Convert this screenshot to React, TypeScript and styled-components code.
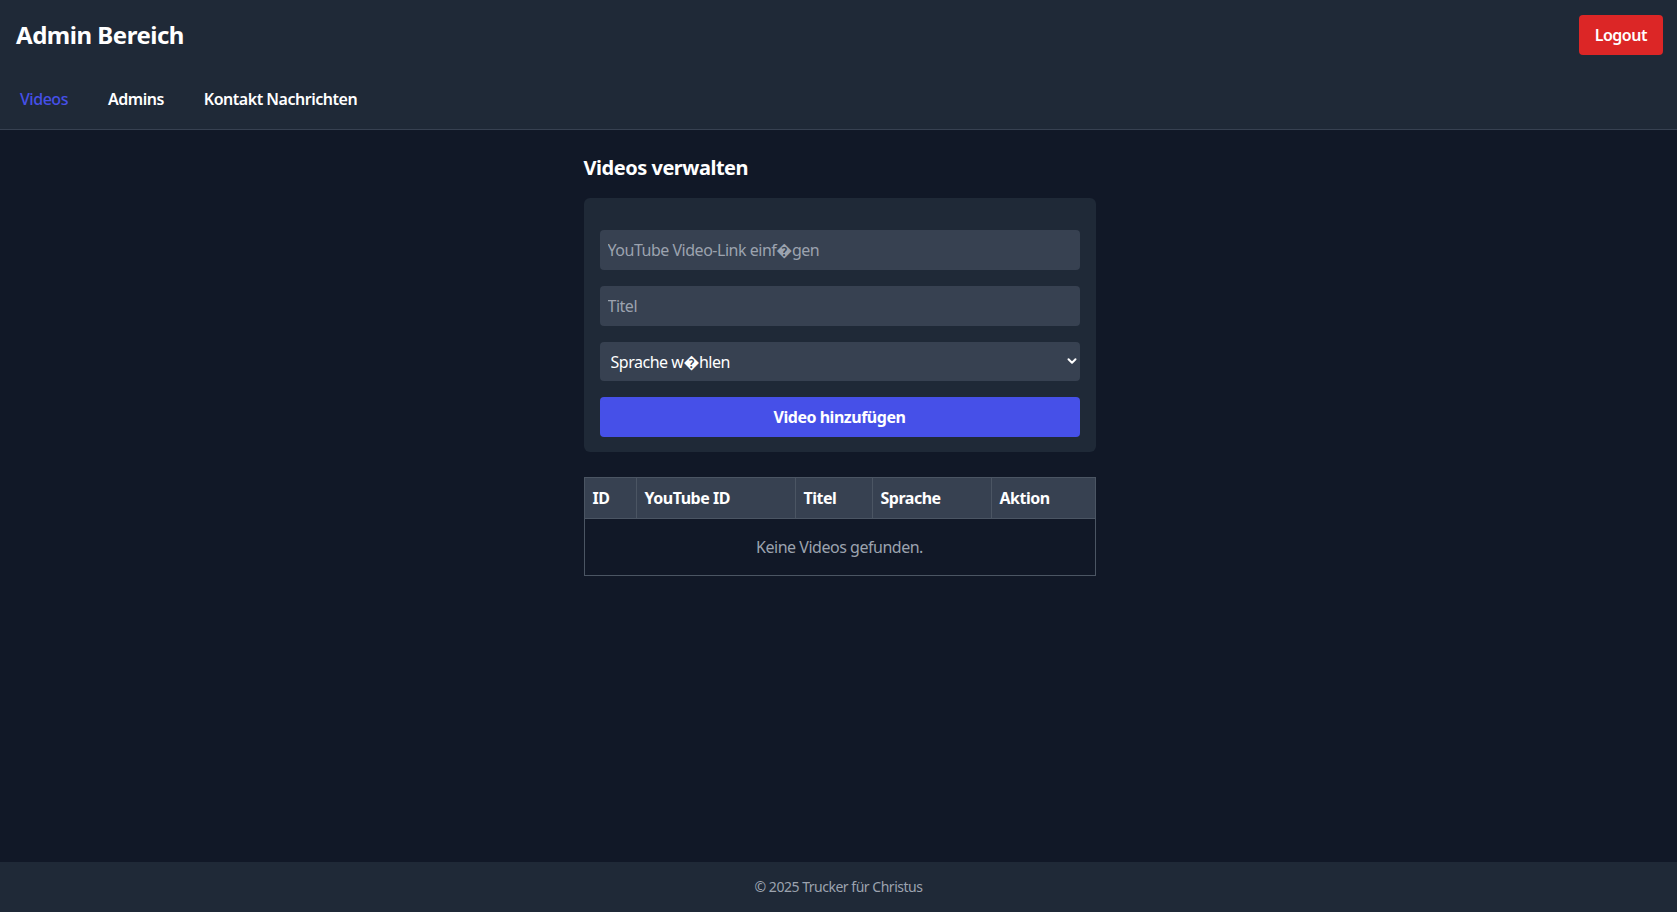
import React, { useState } from "react";
import styled, { createGlobalStyle } from "styled-components";

const columns = [
  { label: "ID", width: 52 },
  { label: "YouTube ID", width: 159 },
  { label: "Titel", width: 77 },
  { label: "Sprache", width: 119 },
  { label: "Aktion", width: 104 },
];

const tabs = ["Videos", "Admins", "Kontakt Nachrichten"];

export default function App() {
  const [tab, setTab] = useState("Videos");
  const [link, setLink] = useState("");
  const [title, setTitle] = useState("");
  const [lang, setLang] = useState("");

  return (
    <>
      <GlobalStyle />
      <Page>
        <Header>
          <TopRow>
            <Title>Admin Bereich</Title>
            <LogoutButton>Logout</LogoutButton>
          </TopRow>
          <Nav>
            {tabs.map((t) => (
              <NavLink key={t} $active={t === tab} onClick={() => setTab(t)}>
                {t}
              </NavLink>
            ))}
          </Nav>
        </Header>

        <Main>
          <Container>
            <Heading>Videos verwalten</Heading>
            <FormCard onSubmit={(e) => e.preventDefault()}>
              <Input
                placeholder={"YouTube Video-Link einf\uFFFDgen"}
                value={link}
                onChange={(e) => setLink(e.target.value)}
              />
              <Input
                placeholder="Titel"
                value={title}
                onChange={(e) => setTitle(e.target.value)}
              />
              <SelectWrap>
                <Select value={lang} onChange={(e) => setLang(e.target.value)}>
                  <option value="">{"Sprache w\uFFFDhlen"}</option>
                  <option value="de">Deutsch</option>
                  <option value="en">English</option>
                </Select>
                <Chevron width="10" height="10" viewBox="0 0 10 10">
                  <path d="M1.5 3.2l3.5 3.5 3.5-3.5" fill="none" stroke="#fff" strokeWidth="2" strokeLinecap="round" strokeLinejoin="round" />
                </Chevron>
              </SelectWrap>
              <SubmitButton type="submit">Video hinzufügen</SubmitButton>
            </FormCard>

            <Table>
              <thead>
                <tr>
                  {columns.map((c) => (
                    <Th key={c.label} $w={c.width}>
                      {c.label}
                    </Th>
                  ))}
                </tr>
              </thead>
              <tbody>
                <tr>
                  <EmptyCell colSpan={5}>Keine Videos gefunden.</EmptyCell>
                </tr>
              </tbody>
            </Table>
          </Container>
        </Main>

        <Footer>© 2025 Trucker für Christus</Footer>
      </Page>
    </>
  );
}

const GlobalStyle = createGlobalStyle`
  body {
    margin: 0;
    background: #111827;
    color: #fff;
    font-family: "Noto Sans", "Open Sans", sans-serif;
    letter-spacing: -0.03em;
  }
  * {
    box-sizing: border-box;
  }
  input, select, button {
    letter-spacing: inherit;
  }
`;

const Page = styled.div`
  display: flex;
  flex-direction: column;
  min-height: 100vh;
`;

const Header = styled.header`
  background: #1f2937;
  border-bottom: 1px solid #374151;
  padding: 15px 14px 18px 16px;
`;

const TopRow = styled.div`
  display: flex;
  align-items: center;
  justify-content: space-between;
  height: 40px;
`;

const Title = styled.h1`
  margin: 0;
  font-size: 24px;
  line-height: 32px;
  font-weight: 700;
  color: #fff;
`;

const LogoutButton = styled.button`
  height: 40px;
  padding: 0 16px;
  border: none;
  border-radius: 4px;
  background: #dc2626;
  color: #fff;
  font-family: inherit;
  font-size: 16px;
  font-weight: 600;
  cursor: pointer;
`;

const Nav = styled.nav`
  display: flex;
  gap: 32px;
  margin-top: 32px;
`;

const NavLink = styled.a<{ $active?: boolean }>`
  padding: 0 4px;
  font-size: 16px;
  line-height: 24px;
  font-weight: ${(p) => (p.$active ? 500 : 600)};
  color: ${(p) => (p.$active ? "#4650e8" : "#fff")};
  cursor: pointer;
`;

const Main = styled.main`
  flex: 1;
  padding: 24px 23px 24px 25px;
`;

const Container = styled.div`
  max-width: 512px;
  margin: 0 auto;
`;

const Heading = styled.h2`
  margin: 0 0 16px;
  font-size: 20px;
  line-height: 28px;
  font-weight: 700;
`;

const FormCard = styled.form`
  display: flex;
  flex-direction: column;
  gap: 16px;
  padding: 32px 16px 15px;
  background: #1f2937;
  border-radius: 6px;
`;

const Input = styled.input`
  width: 100%;
  height: 40px;
  padding: 8px;
  border: none;
  border-radius: 4px;
  background: #374151;
  color: #fff;
  font-family: inherit;
  font-size: 16px;
  outline: none;

  &::placeholder {
    color: #9ca3af;
  }
`;

const SelectWrap = styled.div`
  position: relative;
`;

const Select = styled.select`
  width: 100%;
  height: 39px;
  padding: 0 32px 0 11px;
  border: none;
  border-radius: 4px;
  background: #374151;
  color: #fff;
  font-family: inherit;
  font-size: 16px;
  appearance: none;
  outline: none;
`;

const Chevron = styled.svg`
  position: absolute;
  right: 3px;
  top: 14px;
  pointer-events: none;
`;

const SubmitButton = styled.button`
  height: 40px;
  border: none;
  border-radius: 4px;
  background: #4650e8;
  color: #fff;
  font-family: inherit;
  font-size: 16px;
  font-weight: 700;
  cursor: pointer;
`;

const Table = styled.table`
  width: 100%;
  margin-top: 25px;
  border-collapse: collapse;
  border: 1px solid #4b5563;
`;

const Th = styled.th<{ $w: number }>`
  width: ${(p) => p.$w}px;
  padding: 8px;
  background: #374151;
  border: 1px solid #4b5563;
  text-align: left;
  font-size: 16px;
  line-height: 24px;
  font-weight: 700;
`;

const EmptyCell = styled.td`
  padding: 16px;
  text-align: center;
  color: #9ca3af;
  font-size: 16px;
  line-height: 24px;
`;

const Footer = styled.footer`
  background: #1f2937;
  padding: 15px 16px;
  text-align: center;
  font-size: 14px;
  line-height: 20px;
  color: #9ca3af;
`;
